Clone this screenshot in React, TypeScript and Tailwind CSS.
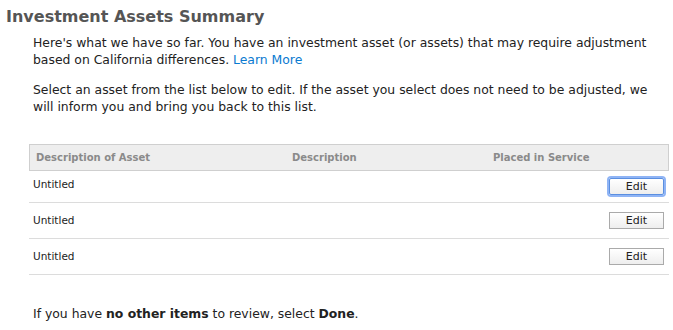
const rows = ['Untitled', 'Untitled', 'Untitled'];

export default function App() {
  return (
    <div className="h-[330px] w-[673px] bg-white text-[#222] [font-family:'DejaVu_Sans',Verdana,sans-serif]">
      <h1 className="pl-[6px] pt-[6px] text-[16px] font-bold leading-[22px] text-[#555]">Investment Assets Summary</h1>

      <div className="mt-[6px] pl-[33px] pr-[12px] text-[12.4px] leading-[17px]">
        <p>
          Here's what we have so far. You have an investment asset (or assets) that may require adjustment based on
          California differences. <a className="text-[#0a7ad0]">Learn More</a>
        </p>
        <p className="mt-[13px]">
          Select an asset from the list below to edit. If the asset you select does not need to be adjusted, we will
          inform you and bring you back to this list.
        </p>
      </div>

      <div className="ml-[29px] mt-[29px] w-[640px]">
        <div className="grid h-[27px] grid-cols-[256px_201px_1fr] items-center border border-[#cfcfcf] bg-[#eeeeee] pl-[6px] text-[10px] font-bold text-[#8a8a8a]">
          <span>Description of Asset</span>
          <span>Description</span>
          <span>Placed in Service</span>
        </div>
        {rows.map((name, i) => (
          <div
            key={i}
            className={
              i === 0
                ? 'flex h-[32px] items-center justify-between border-b border-[#dcdcdc] pl-[4px] pr-[5px] text-[10.5px]'
                : 'flex h-[36px] items-center justify-between border-b border-[#dcdcdc] pl-[4px] pr-[5px] text-[10.5px]'
            }
          >
            <span className={i === 0 ? '-mt-[3px]' : ''}>{name}</span>
            <button
              type="button"
              className={
                i === 0
                  ? 'h-[17px] w-[55px] rounded-[2px] border border-[#5b8fe0] bg-gradient-to-b from-white to-[#eeeeee] text-[11px] leading-[15px] text-[#222] shadow-[0_0_0_2px_#8fb4f5]'
                  : 'h-[17px] w-[55px] border border-[#aaaaaa] bg-gradient-to-b from-white to-[#eeeeee] text-[11px] leading-[15px] text-[#222]'
              }
            >
              Edit
            </button>
          </div>
        ))}
      </div>

      <p className="mt-[30px] pl-[33px] text-[12.4px] leading-[17px]">
        If you have <b>no other items</b> to review, select <b>Done</b>.
      </p>
    </div>
  );
}
